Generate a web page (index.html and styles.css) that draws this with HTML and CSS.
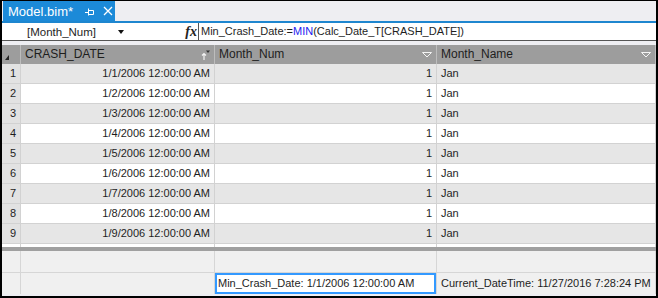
FILE: index.html
```html
<!DOCTYPE html>
<html lang="en">
<head>
    <meta charset="UTF-8">
    <title>Model.bim</title>
    <link rel="stylesheet" href="styles.css">
</head>
<body>

<div class="window">
    <div class="tabstrip">
        <div class="tab">
            <span class="tab-title">Model.bim*</span>
            <svg class="pin" width="10" height="8" viewBox="0 0 10 8"><path d="M0 4.5H3.5M3.5 0.5V7.5M3.5 2.5H8.5V6.5H3.5" stroke="#fff" fill="none"/></svg>
            <svg class="close" width="10" height="10" viewBox="0 0 10 10"><path d="M1 1L9 9M9 1L1 9" stroke="#fff" stroke-width="1.3"/></svg>
        </div>
    </div>

    <div class="formula-bar">
        <div class="picker">
            <span class="picker-text">[Month_Num]</span>
            <span class="caret"></span>
            <span class="fx">fx</span>
        </div>
        <div class="formula">Min_Crash_Date:=<span class="fn">MIN</span>(Calc_Date_T[CRASH_DATE])</div>
    </div>

    <div class="gap"></div>

    <!-- table grid -->
    <div class="row head">
        <div class="cell num"><span class="corner"></span></div>
        <div class="cell">CRASH_DATE
            <svg class="sort" width="9" height="10" viewBox="0 0 9 10"><path d="M3 10V3.5M1 5.5L3 3.5L5 5.5" stroke="#f4f4f4" stroke-width="1.2" fill="none"/><path d="M5 0.5H9L7 3Z" fill="#333"/></svg>
        </div>
        <div class="cell">Month_Num
            <svg class="filter" width="10" height="6" viewBox="0 0 10 6"><path d="M0.5 0.5H9.5L5 5Z" stroke="#f4f4f4" fill="none"/></svg>
        </div>
        <div class="cell">Month_Name
            <svg class="filter" width="10" height="6" viewBox="0 0 10 6"><path d="M0.5 0.5H9.5L5 5Z" stroke="#f4f4f4" fill="none"/></svg>
        </div>
    </div>

    <div class="row odd"><div class="cell num">1</div><div class="cell right">1/1/2006 12:00:00 AM</div><div class="cell right">1</div><div class="cell">Jan</div></div>
    <div class="row"><div class="cell num">2</div><div class="cell right">1/2/2006 12:00:00 AM</div><div class="cell right">1</div><div class="cell">Jan</div></div>
    <div class="row odd"><div class="cell num">3</div><div class="cell right">1/3/2006 12:00:00 AM</div><div class="cell right">1</div><div class="cell">Jan</div></div>
    <div class="row"><div class="cell num">4</div><div class="cell right">1/4/2006 12:00:00 AM</div><div class="cell right">1</div><div class="cell">Jan</div></div>
    <div class="row odd"><div class="cell num">5</div><div class="cell right">1/5/2006 12:00:00 AM</div><div class="cell right">1</div><div class="cell">Jan</div></div>
    <div class="row"><div class="cell num">6</div><div class="cell right">1/6/2006 12:00:00 AM</div><div class="cell right">1</div><div class="cell">Jan</div></div>
    <div class="row odd"><div class="cell num">7</div><div class="cell right">1/7/2006 12:00:00 AM</div><div class="cell right">1</div><div class="cell">Jan</div></div>
    <div class="row"><div class="cell num">8</div><div class="cell right">1/8/2006 12:00:00 AM</div><div class="cell right">1</div><div class="cell">Jan</div></div>
    <div class="row odd"><div class="cell num">9</div><div class="cell right">1/9/2006 12:00:00 AM</div><div class="cell right">1</div><div class="cell">Jan</div></div>
    <div class="row partial"><div class="cell num"></div><div class="cell"></div><div class="cell"></div><div class="cell"></div></div>

    <div class="splitter"></div>

    <!-- measure grid -->
    <div class="row measure"><div class="cell"></div><div class="cell"></div><div class="cell"></div><div class="cell"></div></div>
    <div class="row measure last">
        <div class="cell"></div>
        <div class="cell"></div>
        <div class="cell selected">Min_Crash_Date: 1/1/2006 12:00:00 AM</div>
        <div class="cell">Current_DateTime: 11/27/2016 7:28:24 PM</div>
    </div>
</div>

</body>
</html>
```

FILE: styles.css
```css
body {
    margin: 0;
    font-family: "Liberation Sans", Arial, sans-serif;
    font-size: 11px;
    color: #1e1e1e;
}
.window {
    width: 658px;
    height: 298px;
    box-sizing: border-box;
    border: 2px solid #000;
    border-top-width: 1px;
    background-color: #eeeef2;
    overflow: hidden;
}
.tabstrip {
    height: 22px;
    padding: 2px 0 0 1px;
    box-sizing: border-box;
    border-bottom: 2px solid #1e86cf;
    display: flex;
    align-items: flex-end;
}
.tab {
    height: 20px;
    width: 112px;
    box-sizing: border-box;
    background-color: #1c8ad8;
    color: #fff;
    display: flex;
    align-items: center;
    padding-left: 5px;
}
.tab-title {
    font-size: 13px;
    width: 77px;
}
.pin {
    margin-top: 1px;
}
.close {
    margin-left: 8px;
}
.formula-bar {
    height: 18px;
    background-color: #fff;
    border-bottom: 1px solid #555;
    box-sizing: border-box;
    display: flex;
}
.picker {
    width: 197px;
    display: flex;
    align-items: center;
    padding-left: 25px;
    box-sizing: border-box;
    border-right: 1px solid #555;
}
.picker-text {
    width: 91px;
    font-size: 11.5px;
}
.caret {
    width: 0;
    height: 0;
    border-left: 3.5px solid transparent;
    border-right: 3.5px solid transparent;
    border-top: 4px solid #111;
}
.fx {
    margin-left: auto;
    margin-right: 1px;
    font-family: "Liberation Serif", serif;
    font-style: italic;
    font-weight: bold;
    font-size: 14px;
    color: #222;
}
.formula {
    padding-left: 2px;
    font-size: 11px;
    line-height: 17px;
    white-space: nowrap;
}
.fn {
    color: #1c1cf0;
}
.gap {
    height: 4px;
}
.row {
    display: grid;
    grid-template-columns: 19px 194px 222px 1fr;
    height: 20px;
    background-color: #fff;
}
.row.odd {
    background-color: #e6e6e6;
}
.cell {
    border-right: 1px solid #d2d2d2;
    border-bottom: 1px solid #d2d2d2;
    padding: 0 4px;
    line-height: 19px;
    white-space: nowrap;
    overflow: hidden;
    display: flex;
    align-items: center;
}
.cell.right {
    justify-content: flex-end;
}
.cell.num {
    background-color: #e2e2e2;
    padding-left: 8px;
}
.row.head {
    height: 19px;
    background-color: #9d9d9d;
}
.row.head .cell {
    border-right-color: #bdbdbd;
    border-bottom: none;
    font-size: 12px;
}
.row.head .cell.num {
    background-color: #9d9d9d;
    padding-left: 3px;
    align-items: flex-end;
    padding-bottom: 4px;
}
.corner {
    width: 0;
    height: 0;
    border-left: 4px solid transparent;
    border-bottom: 5px solid #222;
}
.sort {
    margin-left: auto;
}
.filter {
    margin-left: auto;
    margin-right: 0;
}
.row.partial {
    height: 3px;
}
.row.partial .cell {
    border-bottom: none;
    background-color: #fff;
}
.splitter {
    height: 4px;
    background-color: #a0a0a0;
}
.row.measure {
    height: 22px;
    background-color: #f0f0f0;
}
.row.measure .cell {
    border-color: #d6d6d6;
    line-height: 21px;
}
.row.measure.last {
    height: 21px;
}
.row.measure.last .cell {
    border-bottom: none;
}
.cell.selected {
    background-color: #fff;
    box-shadow: inset 0 0 0 2px #3399ff;
    padding-left: 3px;
}
.row.measure .cell:nth-child(3) {
    padding-left: 3px;
}
```
